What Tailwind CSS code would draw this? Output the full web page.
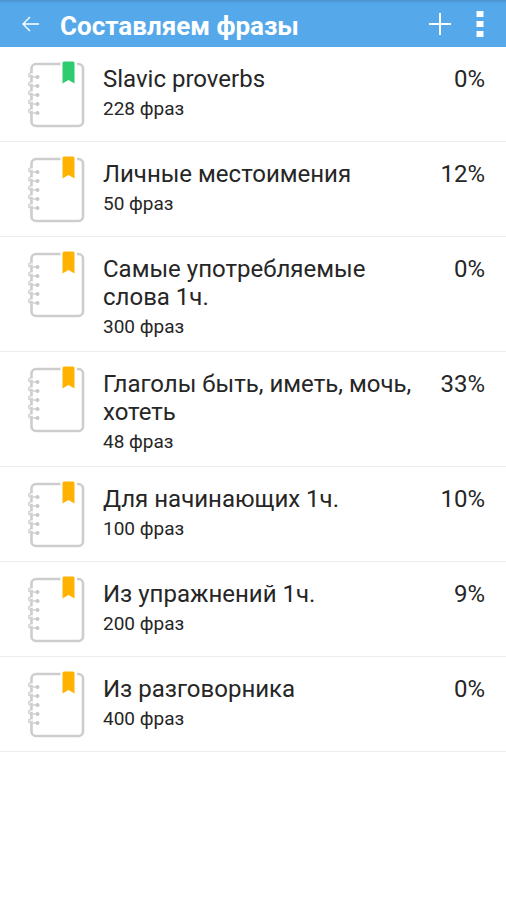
<!DOCTYPE html>
<html lang="ru">
<head>
  <meta charset="UTF-8" />
  <meta name="viewport" content="width=device-width, initial-scale=1.0" />
  <title>Составляем фразы</title>
  <script src="https://cdn.jsdelivr.net/npm/@tailwindcss/browser@4"></script>
</head>
<body class="bg-white text-[#262626] font-[Roboto,sans-serif]">
  <!-- notebook icon, bookmark takes currentColor -->
  <svg class="hidden" xmlns="http://www.w3.org/2000/svg">
    <symbol id="notebook" viewBox="0 0 58 68">
      <path d="M33.500 3H9a4.500 4.500 0 0 0-4.500 4.500v53a4.500 4.500 0 0 0 4.500 4.500h42.500a4.500 4.500 0 0 0 4.500-4.500V7.500a4.500 4.500 0 0 0-4.500-4.500h-1.500" fill="none" stroke="#cdcdcd" stroke-width="2.600" />
      <path d="M2 13h5M2 22h5M2 31h5M2 40h5M2 49h5" fill="none" stroke="#fff" stroke-width="1.500" />
      <path d="M10.500 16H4C1 16 1 12 4 12M10.500 25H4C1 25 1 21 4 21M10.500 34H4C1 34 1 30 4 30M10.500 43H4C1 43 1 39 4 39M10.500 52H4C1 52 1 48 4 48" fill="none" stroke="#d2d2d2" stroke-width="1.500" />
      <g fill="#c8c8c8">
        <circle cx="10.500" cy="16" r="2" />
        <circle cx="10.500" cy="25" r="2" />
        <circle cx="10.500" cy="34" r="2" />
        <circle cx="10.500" cy="43" r="2" />
        <circle cx="10.500" cy="52" r="2" />
      </g>
      <path d="M37 .5h9a1.500 1.500 0 0 1 1.500 1.500V22.500l-6-3.500-6 3.500V2A1.500 1.500 0 0 1 37 .5z" fill="currentColor" />
    </symbol>
  </svg>

  <header class="flex h-[47px] items-center bg-linear-to-b from-[#4a92cc] from-0% via-[#55a9eb] via-8% to-[#55a9eb] pl-5 pr-[18px] text-white">
    <button type="button" aria-label="Назад" class="flex h-10 w-5 shrink-0 items-center justify-center">
      <svg class="h-5 w-5" viewBox="0 0 20 20" fill="none" stroke="currentColor" stroke-width="1.400">
        <path d="M19 10H3M10 3L3 10l7 7" />
      </svg>
    </button>
    <h1 class="ml-5 mt-1 min-w-0 flex-1 truncate text-[26px] leading-9 font-bold">Составляем фразы</h1>
    <button type="button" aria-label="Добавить" class="flex h-10 w-6 shrink-0 items-center justify-center">
      <svg class="h-6 w-6" viewBox="0 0 24 24" fill="none" stroke="currentColor" stroke-width="2">
        <path d="M12 1v22M1 12h22" />
      </svg>
    </button>
    <button type="button" aria-label="Меню" class="ml-5 flex h-10 w-4 shrink-0 items-center justify-center">
      <svg class="h-7 w-2" viewBox="0 0 8 28" fill="currentColor">
        <path d="M.5 1h7v6h-7zM.5 11h7v6h-7zM.5 21h7v6h-7z" />
      </svg>
    </button>
  </header>

  <main>
    <ul>
      <li class="border-b border-[#ececec]">
        <a href="#" class="flex min-h-[94px] items-start pb-3 pl-[27px] pr-[21px] pt-[18px]">
          <svg class="-my-1 h-[68px] w-[58px] shrink-0 text-[#2ecc71]"><use href="#notebook" /></svg>
          <div class="ml-[18px] min-w-0 flex-1">
            <h2 class="text-[24px] leading-7">Slavic proverbs</h2>
            <p class="mt-1 text-[19px] leading-6">228 фраз</p>
          </div>
          <span class="ml-4 text-[24px] leading-7">0%</span>
        </a>
      </li>
      <li class="border-b border-[#ececec]">
        <a href="#" class="flex min-h-[94px] items-start pb-3 pl-[27px] pr-[21px] pt-[18px]">
          <svg class="-my-1 h-[68px] w-[58px] shrink-0 text-[#ffb300]"><use href="#notebook" /></svg>
          <div class="ml-[18px] min-w-0 flex-1">
            <h2 class="text-[24px] leading-7">Личные местоимения</h2>
            <p class="mt-1 text-[19px] leading-6">50 фраз</p>
          </div>
          <span class="ml-4 text-[24px] leading-7">12%</span>
        </a>
      </li>
      <li class="border-b border-[#ececec]">
        <a href="#" class="flex min-h-[94px] items-start pb-3 pl-[27px] pr-[21px] pt-[18px]">
          <svg class="-my-1 h-[68px] w-[58px] shrink-0 text-[#ffb300]"><use href="#notebook" /></svg>
          <div class="ml-[18px] min-w-0 flex-1">
            <h2 class="text-[24px] leading-7">Самые употребляемые слова 1ч.</h2>
            <p class="mt-1 text-[19px] leading-6">300 фраз</p>
          </div>
          <span class="ml-4 text-[24px] leading-7">0%</span>
        </a>
      </li>
      <li class="border-b border-[#ececec]">
        <a href="#" class="flex min-h-[94px] items-start pb-3 pl-[27px] pr-[21px] pt-[18px]">
          <svg class="-my-1 h-[68px] w-[58px] shrink-0 text-[#ffb300]"><use href="#notebook" /></svg>
          <div class="ml-[18px] min-w-0 flex-1">
            <h2 class="text-[24px] leading-7">Глаголы быть, иметь, мочь, хотеть</h2>
            <p class="mt-1 text-[19px] leading-6">48 фраз</p>
          </div>
          <span class="ml-4 text-[24px] leading-7">33%</span>
        </a>
      </li>
      <li class="border-b border-[#ececec]">
        <a href="#" class="flex min-h-[94px] items-start pb-3 pl-[27px] pr-[21px] pt-[18px]">
          <svg class="-my-1 h-[68px] w-[58px] shrink-0 text-[#ffb300]"><use href="#notebook" /></svg>
          <div class="ml-[18px] min-w-0 flex-1">
            <h2 class="text-[24px] leading-7">Для начинающих 1ч.</h2>
            <p class="mt-1 text-[19px] leading-6">100 фраз</p>
          </div>
          <span class="ml-4 text-[24px] leading-7">10%</span>
        </a>
      </li>
      <li class="border-b border-[#ececec]">
        <a href="#" class="flex min-h-[94px] items-start pb-3 pl-[27px] pr-[21px] pt-[18px]">
          <svg class="-my-1 h-[68px] w-[58px] shrink-0 text-[#ffb300]"><use href="#notebook" /></svg>
          <div class="ml-[18px] min-w-0 flex-1">
            <h2 class="text-[24px] leading-7">Из упражнений 1ч.</h2>
            <p class="mt-1 text-[19px] leading-6">200 фраз</p>
          </div>
          <span class="ml-4 text-[24px] leading-7">9%</span>
        </a>
      </li>
      <li class="border-b border-[#ececec]">
        <a href="#" class="flex min-h-[94px] items-start pb-3 pl-[27px] pr-[21px] pt-[18px]">
          <svg class="-my-1 h-[68px] w-[58px] shrink-0 text-[#ffb300]"><use href="#notebook" /></svg>
          <div class="ml-[18px] min-w-0 flex-1">
            <h2 class="text-[24px] leading-7">Из разговорника</h2>
            <p class="mt-1 text-[19px] leading-6">400 фраз</p>
          </div>
          <span class="ml-4 text-[24px] leading-7">0%</span>
        </a>
      </li>
    </ul>
  </main>
</body>
</html>
